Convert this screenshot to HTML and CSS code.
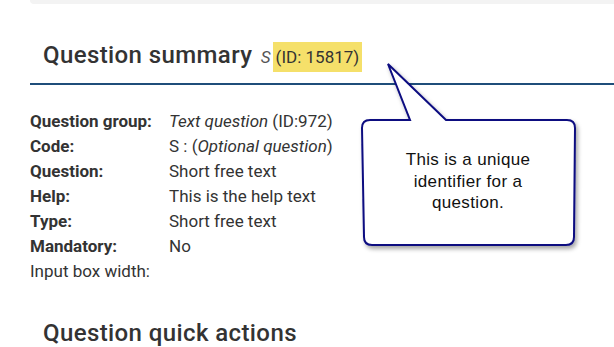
FILE: index.html
```html
<!DOCTYPE html>
<html>
<head>
<meta charset="utf-8">
<link rel="stylesheet" href="styles.css">
</head>
<body>
<div class="topbar"></div>
<div class="summary-head">
  <h3 class="title">Question summary <em class="code">S</em><span class="qid">(ID: 15817)</span></h3>
</div>
<table class="details">
  <tr><th>Question group:</th><td><em>Text question</em> (ID:972)</td></tr>
  <tr><th>Code:</th><td>S : (<em>Optional question</em>)</td></tr>
  <tr><th>Question:</th><td>Short free text</td></tr>
  <tr><th>Help:</th><td>This is the help text</td></tr>
  <tr><th>Type:</th><td>Short free text</td></tr>
  <tr><th>Mandatory:</th><td>No</td></tr>
  <tr><td class="plain">Input box width:</td><td></td></tr>
</table>
<h3 class="title actions">Question quick actions</h3>

<div class="callout">
  <svg class="bubble" width="240" height="200" viewBox="0 0 240 200">
    <defs>
      <filter id="sh" x="-10%" y="-10%" width="130%" height="130%">
        <feDropShadow dx="2" dy="3" stdDeviation="2" flood-color="#000" flood-opacity="0.35"/>
      </filter>
    </defs>
    <path filter="url(#sh)" d="M33 4 L91 60 L212 60 Q220 60 220 68 L219 177 Q219 185 211 185 L17 185 Q9 185 9 177 L7 68 Q7 60 15 60 L55 60 Z" fill="#fff" stroke="#0a0a80" stroke-width="2" stroke-linejoin="miter"/>
  </svg>
  <div class="callout-text">This is a unique identifier for a question.</div>
</div>
</body>
</html>
```
FILE: styles.css
```css
html, body {
  margin: 0;
  padding: 0;
  background: #fff;
}
body {
  font-family: Roboto, "Liberation Sans", sans-serif;
  color: #333;
  position: relative;
  width: 614px;
  height: 347px;
  overflow: hidden;
}
.topbar {
  margin-left: 30px;
  height: 4px;
  background: #f3f3f3;
  border-bottom-left-radius: 4px;
}
.summary-head {
  margin-left: 30px;
  margin-top: 36px;
  border-bottom: 2px solid #1f4e7a;
  padding: 0 0 11px 13px;
}
.title {
  margin: 0;
  font-size: 24px;
  font-weight: 500;
  letter-spacing: 0.4px;
  line-height: 30px;
  color: #333;
}
.code {
  font-size: 17px;
  font-weight: 400;
  letter-spacing: 0;
  color: #555;
  margin-left: 2px;
}
.qid {
  font-size: 17px;
  font-weight: 400;
  letter-spacing: 0;
  background: #f5e06a;
  padding: 5px 3px;
  margin-left: 2px;
  color: #333;
}
.details {
  margin: 24px 0 0 30px;
  border-collapse: collapse;
  font-size: 17px;
  color: #333;
}
.details th, .details td {
  padding: 0;
  height: 25px;
  line-height: 25px;
  text-align: left;
  vertical-align: middle;
  white-space: nowrap;
}
.details th {
  font-weight: 700;
  width: 139px;
}
.actions {
  margin: 34px 0 0 43px;
}
.callout {
  position: absolute;
  left: 355px;
  top: 60px;
  width: 240px;
  height: 200px;
}
.bubble {
  position: absolute;
  left: 0;
  top: 0;
}
.callout-text {
  position: absolute;
  left: 43px;
  top: 89px;
  width: 140px;
  text-align: center;
  font-family: "Liberation Sans", Arial, sans-serif;
  font-size: 17px;
  letter-spacing: 0.35px;
  line-height: 21.5px;
  color: #111;
}
```
